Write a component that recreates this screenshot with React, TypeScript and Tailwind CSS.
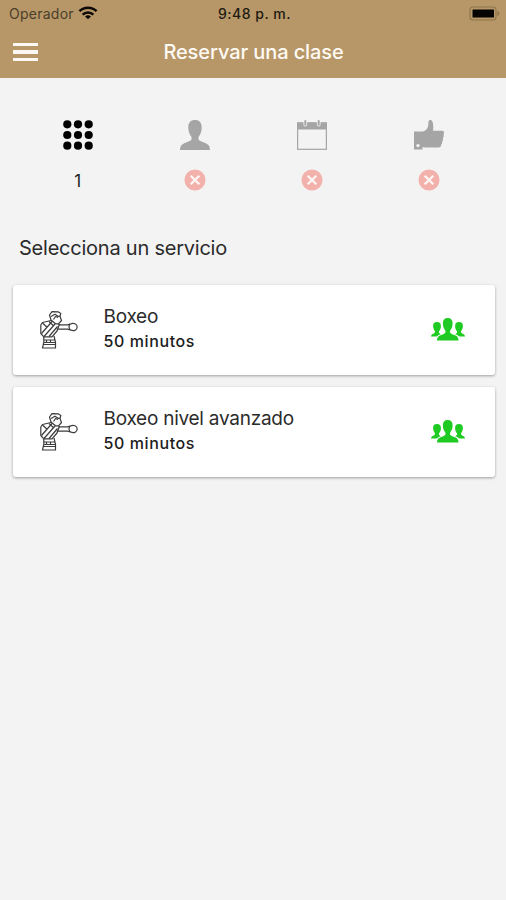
import React from 'react';

const services = [
  { name: 'Boxeo', duration: '50 minutos' },
  { name: 'Boxeo nivel avanzado', duration: '50 minutos' },
];

const WifiIcon = () => (
  <svg width="20" height="14" viewBox="0 0 20 14" fill="none" stroke="#0c0906" strokeWidth="2.4">
    <path d="M1.4 5.2C6.2.5 13.8.5 18.6 5.2" />
    <path d="M4.6 8.6c3-2.9 7.8-2.9 10.8 0" />
    <path d="M10 13.2 7 10.4c1.7-1.4 4.3-1.4 6 0z" fill="#0c0906" stroke="none" />
  </svg>
);

const BatteryIcon = () => (
  <svg width="31" height="15" viewBox="0 0 31 15">
    <rect x="1" y="1" width="26" height="13" rx="3" fill="none" stroke="#8f754d" strokeWidth="1.1" />
    <rect x="3.5" y="3.5" width="21.5" height="8" rx=".6" fill="#050403" />
    <path d="M28.4 5v5c1.3-.5 1.9-1.4 1.9-2.5S29.7 5.5 28.4 5z" fill="#8f754d" />
  </svg>
);

const GridIcon = () => (
  <svg width="30" height="30" viewBox="0 0 30 30" fill="#000">
    {[4.3, 15, 25.7].map((cy) =>
      [4.3, 15, 25.7].map((cx) => <circle key={`${cx}-${cy}`} cx={cx} cy={cy} r="4.1" />)
    )}
  </svg>
);

const PersonIcon = () => (
  <svg width="30" height="30" viewBox="0 0 30 30" fill="#a5a5a5">
    <path d="M15 0c4.500 0 6.700 2.700 6.700 7.200 0 4-1.100 7-2.900 9.200-.5.700-.5 3.100 0 3.700 1 1.300 4 1.800 6.500 2.900C28.500 24.400 30 26.200 30 30H0c0-3.800 1.500-5.600 4.700-7 2.500-1.100 5.500-1.600 6.500-2.900.5-.6.5-3 0-3.700C9.400 14.200 8.300 11.200 8.300 7.200 8.300 2.700 10.500 0 15 0z" />
  </svg>
);

const CalendarIcon = () => (
  <svg width="30" height="30" viewBox="0 0 30 30">
    <rect x=".6" y="3" width="28.8" height="26.3" fill="#f3f3f3" stroke="#a5a5a5" strokeWidth="1.2" />
    <path d="M0 2.400h30V9.500H0z" fill="#a5a5a5" />
    <rect x="6.5" y="-.5" width="3.6" height="7" rx="1.8" fill="#f3f3f3" />
    <rect x="19.9" y="-.5" width="3.6" height="7" rx="1.8" fill="#f3f3f3" />
    <rect x="7.3" y="0" width="2" height="5.8" rx="1" fill="#a5a5a5" />
    <rect x="20.7" y="0" width="2" height="5.8" rx="1" fill="#a5a5a5" />
  </svg>
);

const ThumbIcon = () => (
  <svg width="30" height="30" viewBox="0 0 30 30" fill="#a5a5a5">
    <path d="M0 11.500h8.500V29.500H0z" />
    <path d="M8 11.800c3.500-.4 5.500-2.700 6.200-6C14.600 4 14 2 14.700.9c.8-1.300 2.700-1.200 3.500.3 1.300 2.800 1.200 6.300.8 9.600h8.800c2.300 0 2.800 2 1.700 3.600.5 1.200.3 2.600-.6 3.500.5 1.300.2 2.700-.7 3.400.3 1.500-.1 2.600-1 3.300.1 1.900-.9 3-2.900 3h-9.300c-2.600 0-4.300-.3-7-.3z" />
    <circle cx="4" cy="25.600" r="1.700" fill="#f3f3f3" />
  </svg>
);

const ErrorIcon = () => (
  <svg width="22" height="22" viewBox="0 0 22 22">
    <circle cx="11" cy="11" r="10.5" fill="#f3b1ac" />
    <path d="m6.700 6.700 8.600 8.600m0-8.600-8.600 8.600" stroke="#fdf5f4" strokeWidth="2.3" />
  </svg>
);

const BoxerIcon = () => (
  <svg width="40" height="40" viewBox="0 0 40 40" fill="none" stroke="#3c3c3c" strokeWidth="1.2" strokeLinejoin="round">
    {/* head */}
    <path d="m10.500 5 2.500-3.300 6.500.2 2.300 1.500L21 6.500l1.500 4-3 3.300h-3L12 10z" />
    <path d="m12 6.500 4-2.300 3.500 2.300L21 6M14.500 9.500l2-3 2.500 1" />
    {/* torso */}
    <path d="M12 10.500 3.500 12.500 1.800 15v8.500l3 3.300H13l5-5.800 2.500-7" />
    <path d="m2.500 23.500 10.500-12M5 26.500 16 14M10 26.500l8.500-10M3.500 13l4.500 4.300M10 11.500l4 3.700" />
    {/* arm and glove */}
    <path d="M19.500 14.800h9l2.500-.6M17.800 19.200h10.700l2.800.6" />
    <path d="M31 14.200c3.700-1.800 7.200-.2 7.200 2.900 0 3.200-3.500 4.600-7 2.700-1.500-1.800-1.500-3.800-.2-5.600z" />
    {/* trunks */}
    <path d="M4.800 27v5.500L3.500 38h13v-5.500L15 26M4.500 30h11M4.200 32.500h12M4 34.500h12.500M7.500 30v2.500m4-2.500v2.500" />
  </svg>
);

const GroupIcon = () => (
  <svg width="34" height="24" viewBox="0 0 34 24" fill="#1fcb22">
    <path d="M16.700 0c3.300 0 4.900 2 4.900 5.300 0 3-.8 5.200-2.200 6.900-.5.600-.5 2.200 0 2.800 1 1.300 3.400 1.700 5.200 2.600 2 1 2.900 2.400 2.900 4.900H6c0-2.500.9-3.900 2.900-4.900 1.800-.9 4.200-1.300 5.200-2.600.5-.6.5-2.200 0-2.800-1.400-1.700-2.200-3.900-2.200-6.900C11.900 2 13.400 0 16.700 0z" />
    <path d="M6 4c-2.800 0-3.900 1.500-3.900 4.100 0 2.300.8 3.700 1.700 4.900.4.600.2 1.500-.4 2C2 16.100 0 16.300 0 18.500h5.700c1.200-1.300 3-1.900 4.300-2.300-1.600-.6-2.400-1.400-2-2.900C9.300 12 9.900 10.200 9.900 8.100 9.900 5.500 8.800 4 6 4z" />
    <path d="M28 4c2.800 0 3.900 1.500 3.900 4.100 0 2.300-.8 3.700-1.700 4.900-.4.600-.2 1.500.4 2 1.400 1.100 3.400 1.300 3.400 3.500h-5.700c-1.200-1.300-3-1.900-4.300-2.300 1.600-.6 2.400-1.400 2-2.900-1.300-1.300-1.900-3.100-1.900-5.200C24.100 5.500 25.200 4 28 4z" />
  </svg>
);

const Header = () => (
  <header className="h-[78px] bg-[#b79768]">
    <div className="h-[26px] pl-[9px] pr-[6px] grid grid-cols-[1fr_auto_1fr] items-center text-[14px] text-[#201a12]">
      <div className="flex items-center gap-1">
        <span className="text-[#4b3e2b] tracking-[0.25px]">Operador</span>
        <WifiIcon />
      </div>
      <span className="text-center font-medium tracking-[0.5px]">9:48 p. m.</span>
      <div className="flex justify-end">
        <BatteryIcon />
      </div>
    </div>
    <div className="h-[52px] pl-[12.5px] pr-[11.5px] grid grid-cols-[26px_1fr_26px] items-center">
      <button className="flex flex-col gap-1" aria-label="Menú">
        <span className="w-[25px] h-[3.5px] bg-[#fbf7f2]" />
        <span className="w-[25px] h-[3.5px] bg-[#fbf7f2]" />
        <span className="w-[25px] h-[3.5px] bg-[#fbf7f2]" />
      </button>
      <h1 className="text-center text-[20px] font-medium tracking-[-0.1px] text-[#fffaf4]">Reservar una clase</h1>
    </div>
  </header>
);

export default function App() {
  return (
    <div className="w-full h-[900px] bg-[#f3f3f3] font-['Inter','Liberation_Sans',sans-serif]">
      <Header />
      <div className="pl-[19px] pr-[18px] pt-[42px] grid grid-cols-4 justify-items-center">
        <div className="flex flex-col items-center gap-[19px]">
          <GridIcon />
          <span className="h-[22px] leading-[24px] text-[17px] text-[#222]">1</span>
        </div>
        <div className="flex flex-col items-center gap-[19px]">
          <PersonIcon />
          <ErrorIcon />
        </div>
        <div className="flex flex-col items-center gap-[19px]">
          <CalendarIcon />
          <ErrorIcon />
        </div>
        <div className="flex flex-col items-center gap-[19px]">
          <ThumbIcon />
          <ErrorIcon />
        </div>
      </div>
      <h2 className="mt-[45px] pl-[19px] leading-[24px] text-[20px] tracking-[-0.23px] text-[#2b2b2b]">Selecciona un servicio</h2>
      <div className="mt-[25px] pl-[12.5px] pr-[11.5px] flex flex-col gap-3">
        {services.map((service) => (
          <div
            key={service.name}
            className="h-[90px] pl-[26px] pr-[29.5px] flex items-center bg-white rounded-[3px] shadow-[0_1px_3px_rgba(0,0,0,0.35)]"
          >
            <BoxerIcon />
            <div className="ml-[25px] mt-[-2px] flex-1">
              <p className="leading-[24px] text-[19px] tracking-[-0.25px] text-[#2b2b2b]">{service.name}</p>
              <p className="leading-[24px] text-[16px] font-medium tracking-[0.6px] text-[#1c1c1c]">{service.duration}</p>
            </div>
            <GroupIcon />
          </div>
        ))}
      </div>
    </div>
  );
}
